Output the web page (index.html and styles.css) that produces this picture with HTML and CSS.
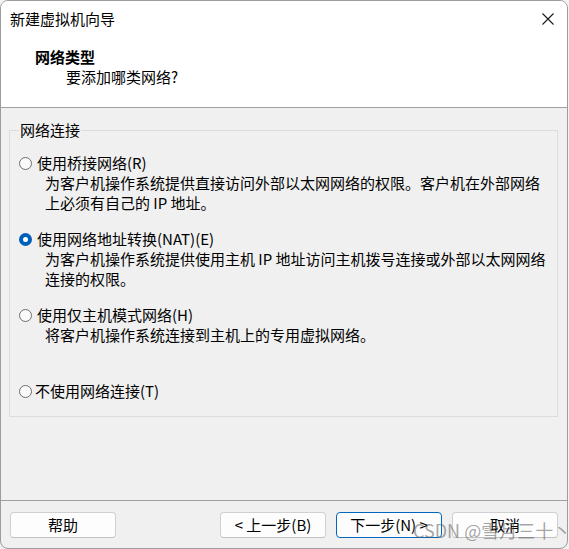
FILE: index.html
```html
<!DOCTYPE html>
<html lang="zh-CN">
<head>
<meta charset="utf-8">
<title>新建虚拟机向导</title>
<link rel="stylesheet" href="styles.css">
</head>
<body>
<div class="window">
  <div class="header">
    <div class="titlebar">
      <span class="title">新建虚拟机向导</span>
      <span class="close"><svg width="12" height="12" viewBox="0 0 12 12"><path d="M0.5 0.5 L11.5 11.5 M11.5 0.5 L0.5 11.5" stroke="#1a1a1a" stroke-width="1.1" fill="none"/></svg></span>
    </div>
    <div class="heading">网络类型</div>
    <div class="subheading">要添加哪类网络?</div>
  </div>
  <div class="content">
    <fieldset class="group">
      <legend class="legend">网络连接</legend>
      <div class="option">
        <div class="option-row"><span class="radio"></span><span>使用桥接网络(R)</span></div>
        <div class="desc">为客户机操作系统提供直接访问外部以太网网络的权限。客户机在外部网络<br>上必须有自己的 IP 地址。</div>
      </div>
      <div class="option">
        <div class="option-row"><span class="radio checked"></span><span>使用网络地址转换(NAT)(E)</span></div>
        <div class="desc">为客户机操作系统提供使用主机 IP 地址访问主机拨号连接或外部以太网网络<br>连接的权限。</div>
      </div>
      <div class="option tall">
        <div class="option-row"><span class="radio"></span><span>使用仅主机模式网络(H)</span></div>
        <div class="desc">将客户机操作系统连接到主机上的专用虚拟网络。</div>
      </div>
      <div class="option last">
        <div class="option-row tight"><span class="radio"></span><span>不使用网络连接(T)</span></div>
      </div>
    </fieldset>
  </div>
  <div class="footer">
    <button class="btn">帮助</button>
    <div class="spacer"></div>
    <button class="btn">&lt; 上一步(B)</button>
    <button class="btn primary">下一步(N) &gt;</button>
    <button class="btn">取消</button>
  </div>
  <div class="watermark">CSDN @雪月三十丶</div>
</div>
</body>
</html>
```

FILE: styles.css
```css
* { box-sizing: border-box; }
html, body {
  margin: 0;
  padding: 0;
  background: #f3f3f3;
}
body {
  font-family: "Noto Sans CJK SC", "Noto Sans", sans-serif;
  font-size: 15px;
  color: #000;
}
.window {
  position: relative;
  width: 568px;
  height: 549px;
  border: 1px solid #9c9c9c;
  border-radius: 8px;
  overflow: hidden;
  background: #f0f0f0;
  display: flex;
  flex-direction: column;
}
.header {
  background: #fff;
  height: 107px;
  border-bottom: 1px solid #a0a0a0;
  flex: none;
}
.titlebar {
  height: 36px;
  display: flex;
  align-items: center;
  justify-content: space-between;
  padding: 0 13px 0 9px;
}
.title {
  line-height: 20px;
  padding-bottom: 1px;
}
.close {
  display: flex;
  width: 12px;
  height: 12px;
}
.heading {
  font-weight: bold;
  line-height: 20px;
  padding-left: 34px;
  margin-top: 10px;
}
.subheading {
  line-height: 20px;
  padding-left: 65px;
}
.content {
  flex: 1;
  padding: 12px 9px 0 8px;
  border-bottom: 1px solid #a0a0a0;
}
.group {
  margin: 0;
  border: 1px solid #dcdcdc;
  padding: 13px 10px 13px 9px;
  height: 297px;
}
.legend {
  padding: 0 1px;
  margin-left: 0;
  line-height: 20px;
}
.option {
  margin-bottom: 16px;
}
.option.tall {
  margin-bottom: 36px;
}
.option.last {
  margin-bottom: 0;
}
.option-row {
  display: flex;
  align-items: center;
  gap: 5px;
  line-height: 20px;
}
.option-row.tight {
  gap: 3px;
}
.radio {
  width: 13px;
  height: 13px;
  border: 1px solid #6e6e6e;
  border-radius: 50%;
  background: #fafafa;
  flex: none;
}
.radio.checked {
  border: 4px solid #005fb8;
  background: #fff;
}
.desc {
  padding-left: 26px;
  line-height: 20px;
}
.footer {
  height: 47px;
  flex: none;
  display: flex;
  align-items: flex-start;
  padding: 11px 9px 0 9px;
  gap: 10px;
}
.spacer { flex: 1; }
.btn {
  font-family: inherit;
  font-size: 15px;
  width: 106px;
  height: 26px;
  border: 1px solid #d0d0d0;
  border-bottom-color: #c0c0c0;
  border-radius: 4px;
  background: #fdfdfd;
  color: #000;
  padding: 0;
  line-height: 22px;
}
.btn.primary {
  border: 1px solid #0067c0;
}
.watermark {
  position: absolute;
  left: 412px;
  top: 516px;
  font-size: 18px;
  font-weight: 400;
  line-height: 26px;
  color: rgba(90, 90, 90, 0.55);
  white-space: nowrap;
  font-family: "Noto Sans CJK SC", "Noto Sans", sans-serif;
}
```
